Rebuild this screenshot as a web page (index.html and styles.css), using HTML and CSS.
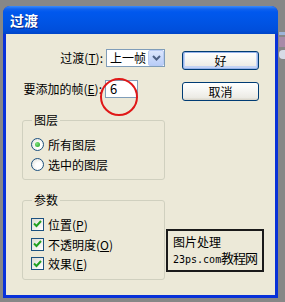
FILE: index.html
```html
<!DOCTYPE html>
<html>
<head>
<meta charset="utf-8">
<link rel="stylesheet" href="styles.css">
</head>
<body>
<div class="desk">
  <div class="win">
    <div class="titlebar"><span class="title">过渡</span></div>
    <div class="body">
      <div class="row r1">
        <label class="lbl l1">过渡(<u>T</u>):</label>
        <div class="select"><span class="sel-text">上一帧</span><span class="drop"><svg width="9" height="6" viewBox="0 0 9 6"><path d="M1 1 L4.5 4.5 L8 1" fill="none" stroke="#4d6185" stroke-width="2"/></svg></span></div>
        <button class="btn ok">好</button>
      </div>
      <div class="row r2">
        <label class="lbl l2">要添加的帧(<u>E</u>):</label>
        <div class="input">6</div>
        <button class="btn cancel">取消</button>
      </div>
      <div class="grp g1">
        <span class="legend">图层</span>
        <div class="opt first"><span class="radio on"></span><span>所有图层</span></div>
        <div class="opt"><span class="radio"></span><span>选中的图层</span></div>
      </div>
      <div class="grp g2">
        <span class="legend">参数</span>
        <div class="opt first"><span class="check"><svg width="9" height="8" viewBox="0 0 9 8"><path d="M1 3.5 L3.5 6 L8 1" fill="none" stroke="#21a121" stroke-width="2"/></svg></span><span>位置(<u>P</u>)</span></div>
        <div class="opt"><span class="check"><svg width="9" height="8" viewBox="0 0 9 8"><path d="M1 3.5 L3.5 6 L8 1" fill="none" stroke="#21a121" stroke-width="2"/></svg></span><span>不透明度(<u>O</u>)</span></div>
        <div class="opt"><span class="check"><svg width="9" height="8" viewBox="0 0 9 8"><path d="M1 3.5 L3.5 6 L8 1" fill="none" stroke="#21a121" stroke-width="2"/></svg></span><span>效果(<u>E</u>)</span></div>
      </div>
      <div class="mark">
        <div class="mark-l">
          <span class="m1">图片处理</span>
          <span class="m2">23ps.com</span>
        </div>
        <span class="m3">教程网</span>
      </div>
      <div class="circle"></div>
    </div>
  </div>
  <div class="side"><span class="s-line"></span><span class="s-icon"></span><span class="s-dot"></span></div>
</div>
</body>
</html>
```
FILE: styles.css
```css
* { box-sizing: border-box; }
html, body { margin: 0; padding: 0; }
body {
  width: 285px; height: 302px; overflow: hidden;
  background: #878787;
  font-family: "Noto Sans CJK SC", "Noto Sans", sans-serif;
  font-size: 12px; color: #000;
}
.desk { position: relative; width: 285px; height: 302px; padding: 6px 0 0 3px; }
.win {
  width: 275px; height: 292px;
  background: #0831d9;
  border-radius: 7px 7px 0 0;
  overflow: hidden;
  display: flex; flex-direction: column;
}
.titlebar {
  height: 28px; flex: none;
  background: linear-gradient(#3c8cf8 0, #0f62ef 3px, #0058ee 6px, #0055e6 50%, #004fdc 85%, #0045c8 100%);
  display: flex; align-items: center; padding-left: 7px;
}
.title { color: #fff; font-weight: bold; font-size: 14px; line-height: 16px; text-shadow: 1px 1px 0 #0a2a8a; }
.body {
  position: relative;
  flex: 1; margin: 0 3px 3px 3px;
  background: #ece9d8;
  padding-top: 15px;
}
.row { display: flex; align-items: flex-start; height: 18px; }
.r2 { margin-top: 13px; }
.lbl { line-height: 18px; text-align: right; white-space: nowrap; }
.l1 { width: 97px; margin-right: 3px; }
.l2 { width: 96px; margin-right: 3px; }
.select {
  width: 59px; height: 18px; background: #fff; border: 1px solid #7f9db9;
  display: flex; align-items: center; justify-content: space-between; padding-left: 3px;
}
.sel-text { line-height: 16px; }
.drop {
  width: 16px; height: 16px; background: linear-gradient(#dbe6fd, #b9cdf8);
  border: 1px solid #b8cbf4; border-radius: 2px;
  display: flex; align-items: center; justify-content: center;
}
.input {
  width: 33px; height: 18px; background: #fff; border: 1px solid #7f9db9;
  padding-left: 4px; line-height: 16px; font-size: 13px;
}
.btn {
  font-family: inherit; font-size: 12px; color: #000;
  width: 77px; height: 19px; margin-top: 2px; padding: 0;
  border: 1px solid #003c74; border-radius: 3px;
  background: linear-gradient(#ffffff 0, #f7f7f4 40%, #ecebe5 85%, #d8d4c8 100%);
  line-height: 16px;
}
.ok { margin-left: 17px; box-shadow: inset 0 0 0 1px #98b4ea, inset 0 -1px 0 2px #c3d3f5; }
.cancel { margin-left: 44px; }
.grp {
  width: 143px; margin-left: 16px;
  border: 1px solid #d0d0bf; border-radius: 3px;
  padding-left: 8px;
}
.g1 { margin-top: 22px; height: 60px; }
.g2 { margin-top: 20px; height: 80px; }
.legend {
  display: block; width: max-content;
  margin: -8px 0 0 1px; padding: 0 2px;
  background: #ece9d8; line-height: 14px;
}
.opt { display: flex; align-items: center; height: 20px; gap: 4px; white-space: nowrap; }
.g1 .opt.first { margin-top: 7px; }
.g2 .opt.first { margin-top: 7px; }
.g2 .opt:last-child { height: 19px; }
.radio {
  width: 13px; height: 13px; border-radius: 50%;
  border: 1px solid #1c5180;
  background: radial-gradient(circle at 60% 60%, #ffffff 30%, #dcdcd4 100%);
  display: flex; align-items: center; justify-content: center;
}
.radio.on::after {
  content: ""; width: 5px; height: 5px; border-radius: 50%;
  background: radial-gradient(circle at 35% 35%, #7ee07e, #21a121);
}
.check {
  width: 13px; height: 13px; border: 1px solid #1c5180;
  background: linear-gradient(135deg, #dcdcd4, #ffffff);
  display: flex; align-items: center; justify-content: center;
}
.mark {
  position: absolute; left: 160px; top: 195px;
  width: 98px; height: 43px;
  border: 2px solid #1a1a1a;
  display: flex; align-items: flex-start; padding: 3px 0 0 5px;
}
.mark-l { display: flex; flex-direction: column; width: 48px; flex: none; }
.m1 { font-size: 12px; line-height: 15px; white-space: nowrap; }
.m2 { font-family: "DejaVu Sans Mono", "Liberation Mono", monospace; font-size: 10px; line-height: 13px; margin-top: 4px; white-space: nowrap; }
.m3 { font-size: 13px; line-height: 15px; margin-top: 16px; letter-spacing: -1px; white-space: nowrap; }
.circle {
  position: absolute; left: 94px; top: 44px;
  width: 38px; height: 38px;
  border: 2px solid #e01818; border-radius: 50%;
}
.side { position: absolute; left: 279px; top: 32px; width: 6px; height: 40px; display: flex; flex-direction: column; }
.s-line { height: 3px; background: #9eb4d9; }
.s-icon { height: 10px; margin-top: 2px; background: #a88aa8; }
.s-dot { height: 9px; margin-top: 3px; background: #d7dbe6; border-radius: 4px 0 0 4px; }
```
